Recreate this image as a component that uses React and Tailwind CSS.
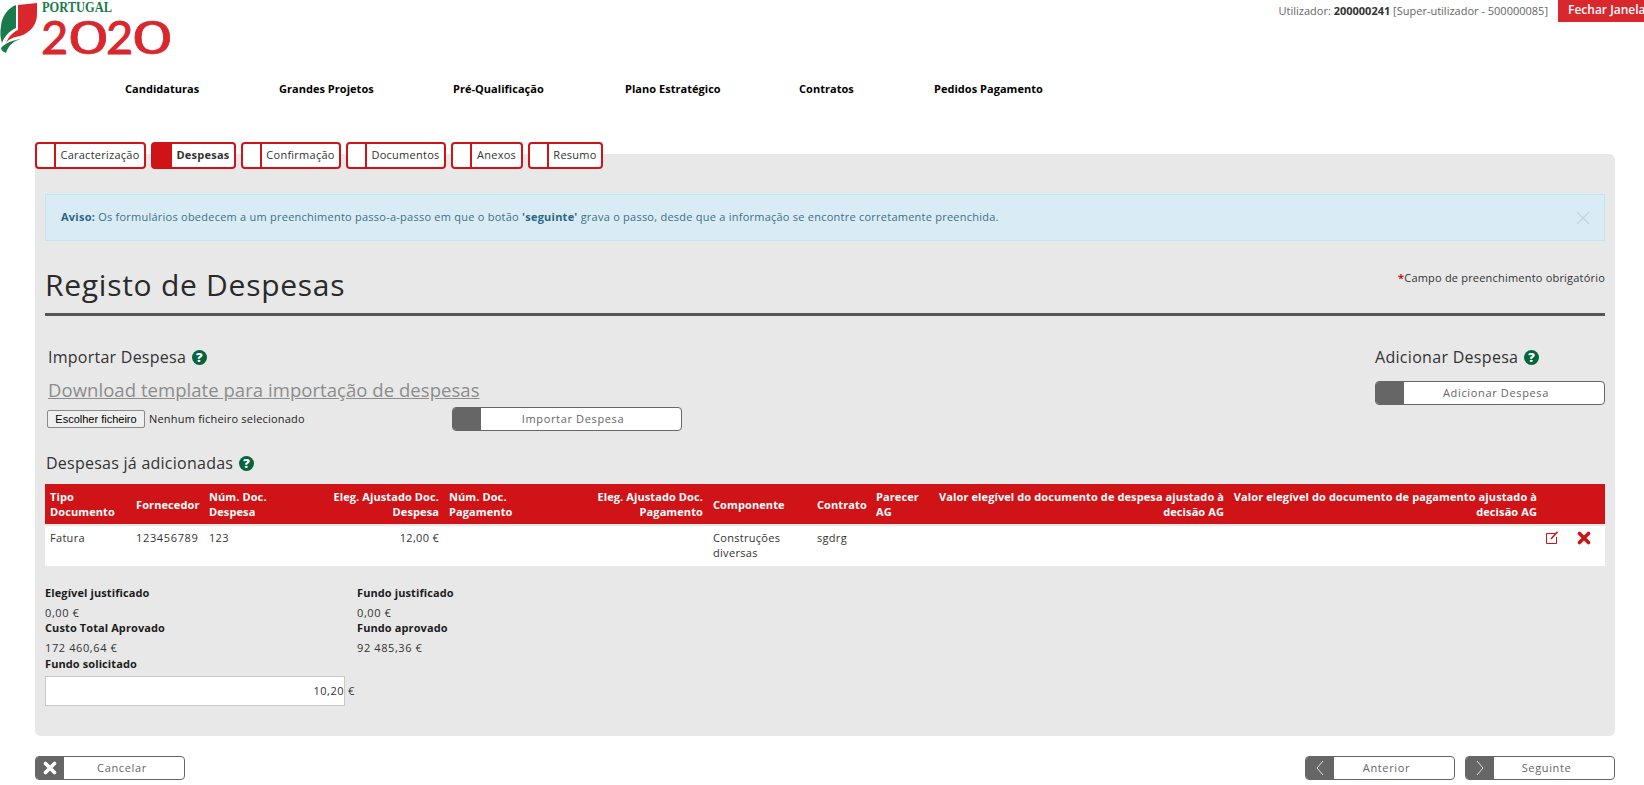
import React from "react";

const F = "[font-family:'Open_Sans',sans-serif]";

function Logo() {
  return (
    <svg width="172" height="58" viewBox="0 0 172 58" className="block overflow-visible">
      <path d="M18 5 L37 3 L37 14 C37 25 30 33 20 36 C14 37 9 39 6 43 C9 36 13 32 18 30 Z" fill="#d9272e" />
      <path d="M16 5 L16 28 C9 31 4 37 2 43 C0 38 0 32 1 26 C2 16 8 8 16 5 Z" fill="#1a7a4c" />
      <path d="M21 39 C13 41 8 46 6 53 C3 52 1 50 1 48 C5 43 13 40 21 39 Z" fill="#1a7a4c" />
      <text x="42" y="12" fontFamily="'Liberation Serif', serif" fontWeight="700" fontSize="14.5" fill="#1a7a4c" textLength="70" lengthAdjust="spacingAndGlyphs">PORTUGAL</text>
      <g fontFamily="Lato, sans-serif" fontSize="47" fill="#d9272e" stroke="#d9272e" strokeWidth="0.9">
        <text x="41" y="53.5">2</text>
        <text transform="translate(69 53.5) scale(1.42 1)" strokeWidth="0.6">0</text>
        <text x="106" y="53.5">2</text>
        <text transform="translate(133 53.5) scale(1.42 1)" strokeWidth="0.6">0</text>
      </g>
    </svg>
  );
}

function Help({ className = "" }) {
  return (
    <span className={`inline-flex w-[15px] h-[15px] rounded-full bg-[#04643c] text-white text-[13px] leading-[15px] font-extrabold items-center justify-center ${className}`}>?</span>
  );
}

function Tab({ w, active, children }) {
  return (
    <div className={`flex h-[27px] shrink-0 rounded-[4px] border-2 border-[#d01317] bg-white ${w}`}>
      <div className={`w-[19px] shrink-0 ${active ? "bg-[#d01317]" : "border-r-2 border-[#d01317]"}`} />
      <div className={`flex-1 flex items-center justify-center text-[11px] tracking-[0.25px] ${active ? "font-bold text-[#333]" : "text-[#333]"}`}>{children}</div>
    </div>
  );
}

function Btn({ w, icon, pr = "pr-[16px]", children }) {
  return (
    <div className={`flex h-[24px] rounded-[4px] border border-[#666] bg-white overflow-hidden ${w}`}>
      <div className="w-[28px] shrink-0 bg-[#666] flex items-center justify-center text-white">{icon}</div>
      <div className={`flex-1 flex items-center justify-center text-[11px] tracking-[0.65px] text-[#666] ${pr}`}>{children}</div>
    </div>
  );
}

const Chevron = ({ left }) => (
  <svg width="8" height="16" viewBox="0 0 8 16" fill="none" stroke="#ddd" strokeWidth="1">
    <path d={left ? "M7 1 L1 8 L7 15" : "M1 1 L7 8 L1 15"} />
  </svg>
);

const XIcon = ({ size = 14, color = "#fff" }) => (
  <svg width={size} height={size} viewBox="0 0 14 14" fill="none" stroke={color} strokeWidth="3.6" strokeLinecap="round">
    <path d="M2.5 2.5 L11.5 11.5 M11.5 2.5 L2.5 11.5" />
  </svg>
);

const Edit = () => (
  <svg width="13" height="13" viewBox="0 0 13 13" fill="none" stroke="#d01317" strokeWidth="1">
    <path d="M9 2.5 H0.5 V12.5 H10.5 V6" />
    <path d="M5 8 L11.5 0.8" strokeWidth="1.6" />
  </svg>
);

const headers = [
  ["Tipo Documento", "w-[86px]", "text-left px-[5px]"],
  ["Fornecedor", "w-[73px]", "text-left px-[5px]"],
  ["Núm. Doc. Despesa", "w-[86px]", "text-left px-[5px]"],
  ["Eleg. Ajustado Doc. Despesa", "w-[154px]", "text-right px-[5px]"],
  ["Núm. Doc. Pagamento", "w-[96px]", "text-left px-[5px]"],
  ["Eleg. Ajustado Doc. Pagamento", "w-[168px]", "text-right px-[5px]"],
  ["Componente", "w-[104px]", "text-left px-[5px]"],
  ["Contrato", "w-[59px]", "text-left px-[5px]"],
  ["Parecer AG", "w-[54px]", "text-left px-[5px]"],
  ["Valor elegível do documento de despesa ajustado à decisão AG", "w-[304px]", "text-right px-[5px]"],
  ["Valor elegível do documento de pagamento ajustado à decisão AG", "w-[313px]", "text-right pl-0 pr-[5px]"],
  ["", "w-[30px]", "text-left px-[5px]"],
  ["", "w-[33px]", "text-left px-[5px]"],
];

function Stat({ label, value, w }) {
  return (
    <div className={w}>
      <div className="text-[11px] leading-[15px] font-bold text-[#1c1c1c] tracking-[0.1px]">{label}</div>
      <div className="mt-[5px] text-[11px] leading-[15px] text-[#333] tracking-[0.6px]">{value}</div>
    </div>
  );
}

export default function App() {
  return (
    <div className={`w-[1644px] h-[785px] overflow-hidden bg-white text-[#333] ${F}`}>
      <header className="h-[142px]">
        <div className="flex justify-between h-[75px]">
          <Logo />
          <div className="flex items-start">
            <div className="mt-[3px] mr-[10px] text-[11px] leading-[15px] text-[#666]">
              Utilizador: <b className="text-[#333]">200000241</b> [Super-utilizador - 500000085]
            </div>
            <div className="w-[86px] h-[22px] bg-[#d9272e] text-white text-[12px] font-semibold leading-[20px] pl-[10px] whitespace-nowrap overflow-hidden">Fechar Janela</div>
          </div>
        </div>
        <nav className="flex pl-[125px] text-[11px] font-bold text-black tracking-[0.03px] leading-[28px]">
          <span className="w-[154px]">Candidaturas</span>
          <span className="w-[174px]">Grandes Projetos</span>
          <span className="w-[172px]">Pré-Qualificação</span>
          <span className="w-[174px]">Plano Estratégico</span>
          <span className="w-[135px]">Contratos</span>
          <span>Pedidos Pagamento</span>
        </nav>
      </header>

      <div className="mx-[35px] w-[1580px]">
        <div className="flex h-[12px] relative z-10">
          <Tab w="w-[111px] mr-[5px]">Caracterização</Tab>
          <Tab w="w-[85px] mr-[5px]" active>Despesas</Tab>
          <Tab w="w-[100px] mr-[5px]">Confirmação</Tab>
          <Tab w="w-[100px] mr-[5px]">Documentos</Tab>
          <Tab w="w-[72px] mr-[5px]">Anexos</Tab>
          <Tab w="w-[75px]">Resumo</Tab>
        </div>

        <main className="bg-[#e8e8e8] rounded-b-[6px] rounded-tr-[6px] h-[582px] px-[10px] pt-[40px]">
          <div className="h-[47px] flex items-center justify-between border border-[#bde6f0] bg-[#d9ecf5] pl-[15px] pr-[14px] text-[11px] tracking-[0.24px] text-[#3f6f87]">
            <div><b className="text-[#2b6584]">Aviso:</b> Os formulários obedecem a um preenchimento passo-a-passo em que o botão <b className="text-[#2b6584]">'seguinte'</b> grava o passo, desde que a informação se encontre corretamente preenchida.</div>
            <svg width="14" height="14" viewBox="0 0 14 14" stroke="#c4d5dc" strokeWidth="1.4"><path d="M1 1 L13 13 M13 1 L1 13" /></svg>
          </div>

          <div className="mt-[17px] h-[58px] border-b-[3px] border-[#555] flex justify-between">
            <h1 className="text-[30px] leading-[40px] pt-[7px] font-normal text-[#2a2a2a] tracking-[0.73px]">Registo de Despesas</h1>
            <div className="pt-[12px] text-[11px] text-[#333] tracking-[0.2px]"><span className="text-[#d01317] font-bold">*</span>Campo de preenchimento obrigatório</div>
          </div>

          <div className="flex justify-between mt-[29px] h-[107px]">
            <div className="pl-[3px] w-[637px]">
              <div className="flex items-center gap-[6px] text-[16px] leading-[24px] tracking-[0.25px] text-[#333]">Importar Despesa <Help /></div>
              <a className="block mt-[8px] text-[18.5px] leading-[26px] text-[#8c8c8c] underline tracking-[0.05px]">Download template para importação de despesas</a>
              <div className="flex items-start justify-between">
                <div className="flex items-center mt-[7px] -ml-[1px]">
                  <div className="w-[98px] h-[18px] border border-[#8a8a8a] rounded-[2px] bg-[#efefef] text-black text-[11px] leading-[16px] text-center font-['Liberation_Sans']">Escolher ficheiro</div>
                  <span className="ml-[4px] text-[11px] tracking-[0.2px] text-[#222]">Nenhum ficheiro selecionado</span>
                </div>
                <Btn w="w-[230px] mt-[4px]">Importar Despesa</Btn>
              </div>
            </div>
            <div className="w-[230px]">
              <div className="flex items-center gap-[6px] text-[16px] leading-[24px] tracking-[0.3px] text-[#333] whitespace-nowrap">Adicionar Despesa <Help /></div>
              <div className="mt-[12px]"><Btn w="w-[230px]">Adicionar Despesa</Btn></div>
            </div>
          </div>

          <div className="-mt-[1px] pl-[1px] flex items-center gap-[6px] text-[16px] leading-[24px] tracking-[0.25px] text-[#333]">Despesas já adicionadas <Help /></div>

          <table className="mt-[9px] table-fixed w-[1560px] border-separate border-spacing-0 text-[11px]">
            <thead>
              <tr className="text-white">
                {headers.map(([t, w, a], i) => (
                  <th key={i} className={`${w} ${a} h-[42px] bg-[#d01317] border-b-2 border-[#e8e8e8] py-0 font-bold text-[11px] leading-[15px] tracking-[0.1px] align-middle`}>{t}</th>
                ))}
              </tr>
            </thead>
            <tbody>
              <tr className="bg-white h-[40px] align-top text-[#333] leading-[15px] tracking-[0.3px]">
                <td className="px-[5px] pt-[4px]">Fatura</td>
                <td className="px-[5px] pt-[4px] tracking-[0.65px]">123456789</td>
                <td className="px-[5px] pt-[4px]">123</td>
                <td className="px-[5px] pt-[4px] text-right">12,00 €</td>
                <td className="px-[5px] pt-[4px]"></td>
                <td className="px-[5px] pt-[4px]"></td>
                <td className="px-[5px] pt-[4px]">Construções diversas</td>
                <td className="px-[5px] pt-[4px]">sgdrg</td>
                <td className="px-[5px] pt-[4px]"></td>
                <td className="px-[5px] pt-[4px]"></td>
                <td className="px-[5px] pt-[4px]"></td>
                <td className="pl-[4px] pt-[5px]"><Edit /></td>
                <td className="px-[5px] pt-[5px]"><XIcon size={14} color="#d01317" /></td>
              </tr>
            </tbody>
          </table>

          <div className="mt-[19px]">
            <div className="flex"><Stat w="w-[312px]" label="Elegível justificado" value="0,00 €" /><Stat label="Fundo justificado" value="0,00 €" /></div>
            <div className="flex"><Stat w="w-[312px]" label="Custo Total Aprovado" value="172 460,64 €" /><Stat label="Fundo aprovado" value="92 485,36 €" /></div>
            <div className="mt-[1px] text-[11px] leading-[15px] font-bold text-[#1c1c1c] tracking-[0.1px]">Fundo solicitado</div>
            <div className="flex items-center mt-[5px]">
              <div className="w-[300px] h-[30px] border border-[#c8c8c8] bg-white text-right text-[11px] leading-[28px] text-[#333] tracking-[0.5px]">10,20</div>
              <span className="ml-[3px] text-[11px] text-[#333]">€</span>
            </div>
          </div>
        </main>

        <footer className="mt-[20px] flex justify-between">
          <Btn w="w-[150px]" pr="pr-[4px]" icon={<XIcon size={14} />}>Cancelar</Btn>
          <div className="flex gap-[10px]">
            <Btn w="w-[150px]" pr="pr-[15px]" icon={<Chevron left />}>Anterior</Btn>
            <Btn w="w-[150px]" pr="pr-[15px]" icon={<Chevron />}>Seguinte</Btn>
          </div>
        </footer>
      </div>
    </div>
  );
}
